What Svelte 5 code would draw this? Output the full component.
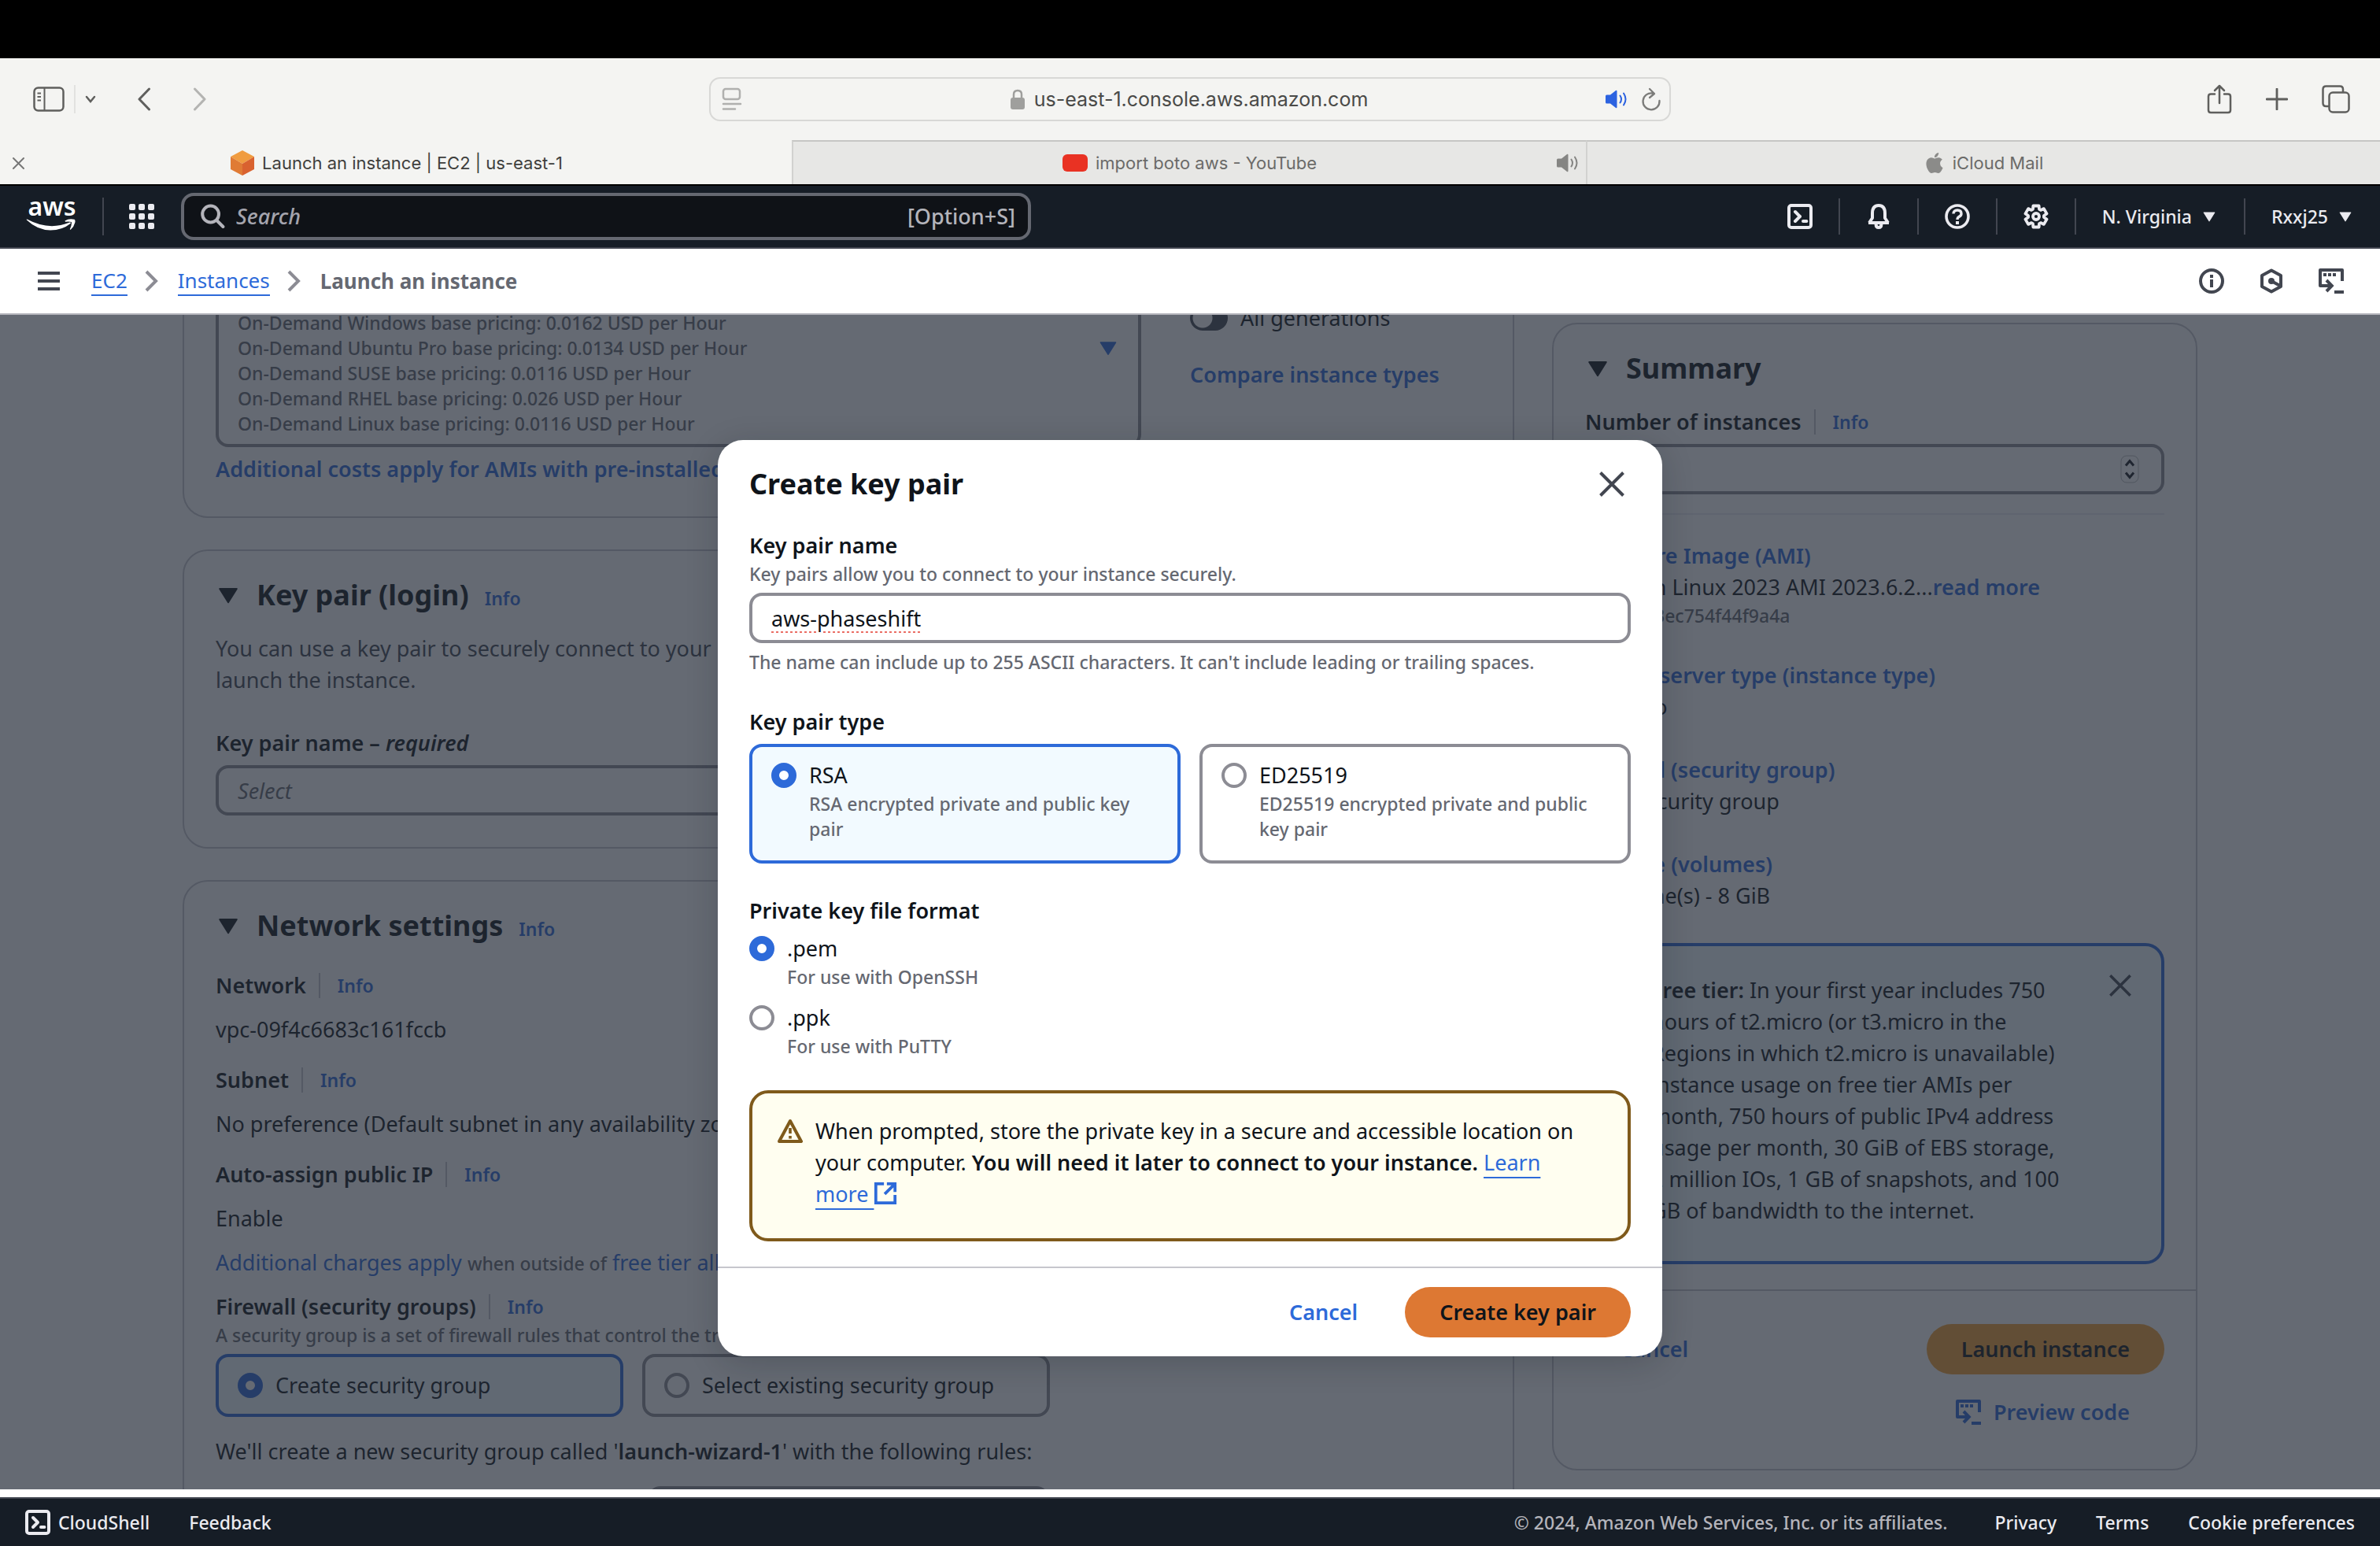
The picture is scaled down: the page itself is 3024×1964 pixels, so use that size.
<script>
  const pricing = [
    'Family: t2    1 vCPU    1 GiB Memory',
    'Current generation: true',
    'On-Demand Windows base pricing: 0.0162 USD per Hour',
    'On-Demand Ubuntu Pro base pricing: 0.0134 USD per Hour',
    'On-Demand SUSE base pricing: 0.0116 USD per Hour',
    'On-Demand RHEL base pricing: 0.026 USD per Hour',
    'On-Demand Linux base pricing: 0.0116 USD per Hour',
  ];

  const network = [
    { label: 'Network', value: 'vpc-09f4c6683c161fccb' },
    { label: 'Subnet', value: 'No preference (Default subnet in any availability zone)' },
    { label: 'Auto-assign public IP', value: 'Enable' },
  ];

  const keyTypes = [
    { id: 'rsa', label: 'RSA', desc: 'RSA encrypted private and public key pair' },
    { id: 'ed25519', label: 'ED25519', desc: 'ED25519 encrypted private and public key pair' },
  ];

  const formats = [
    { id: 'pem', label: '.pem', desc: 'For use with OpenSSH' },
    { id: 'ppk', label: '.ppk', desc: 'For use with PuTTY' },
  ];

  let keyType = $state('rsa');
  let format = $state('pem');
  let group = $state('create');
  let keyName = $state('aws-phaseshift');
  let instances = $state(1);

  // Six-toothed cog outline on a 16-unit grid.
  const gear = Array.from({ length: 6 }, (_, i) => i * 60 - 90)
    .flatMap((a) => [[a - 24, 5], [a - 15, 7], [a + 15, 7], [a + 24, 5]])
    .map(([a, r]) => {
      const t = (a * Math.PI) / 180;
      return `${(8 + r * Math.cos(t)).toFixed(2)},${(8 + r * Math.sin(t)).toFixed(2)}`;
    })
    .join(' ');
</script>

{#snippet triangle(cls)}
  <svg class={cls} viewBox="0 0 16 16" aria-hidden="true"><path d="M2.6 4h10.8L8 12.6z" fill="currentColor" stroke="currentColor" stroke-width="1" stroke-linejoin="round" /></svg>
{/snippet}

{#snippet shell()}
  <svg class="icon" viewBox="0 0 16 16" fill="none" stroke="currentColor" stroke-width="2" aria-hidden="true">
    <rect x="1" y="1" width="14" height="14" rx="1.5" />
    <path d="M5 5l3 3-3 3" stroke-linecap="round" stroke-linejoin="round" />
    <path d="M10 11h2.2" stroke-linecap="round" />
  </svg>
{/snippet}

{#snippet codeIcon()}
  <svg class="icon" viewBox="0 0 16 16" fill="none" stroke="currentColor" stroke-width="2" aria-hidden="true">
    <path d="M15 8V1H1v10h7" stroke-linejoin="round" />
    <path d="M5 7.5L8.4 11 5 14.5" />
    <path d="M3 4h2M6 4h2M9 4h2" />
    <path d="M10 15h6" />
  </svg>
{/snippet}

{#snippet closeIcon(cls)}
  <svg class={cls} viewBox="0 0 32 32" fill="none" stroke="currentColor" stroke-width="4" aria-hidden="true"><path d="M1.5 1.5l29 29M30.5 1.5l-29 29" /></svg>
{/snippet}

{#snippet speaker(cls)}
  <svg class={cls} viewBox="0 0 30 24" aria-hidden="true">
    <path d="M1 8q0-1.5 1.5-1.5H7L14 1q1.5-.8 1.5 1v20q0 1.800-1.500 1L7 17.500H2.500Q1 17.500 1 16z" fill="currentColor" />
    <path d="M19.500 7.500q3 4.500 0 9M24 4.500q5 7.500 0 15" fill="none" stroke="currentColor" stroke-width="2" stroke-linecap="round" />
  </svg>
{/snippet}

<div class="screen">
  <div class="bezel"></div>

  <div class="toolbar">
    <div class="tools">
      <button aria-label="Sidebar" class="sidebar-btn">
        <svg width="40" height="32" viewBox="0 0 40 32" fill="none" stroke="currentColor" stroke-width="2.5"><rect x="1.500" y="1.500" width="37" height="29" rx="5" /><path d="M14.500 2v28M5.500 8.500h4.500M5.500 13h4.500M5.500 17.500h4.500" stroke-width="2" /></svg>
      </button>
      <span class="thin-rule"></span>
      <button aria-label="Tab groups" class="drop-btn"><svg width="14" height="10" viewBox="0 0 14 10" fill="none" stroke="currentColor" stroke-width="2.500" stroke-linecap="round"><path d="M2 2l5 6 5-6" /></svg></button>
      <button aria-label="Back" class="back-btn"><svg width="18" height="30" viewBox="0 0 18 30" fill="none" stroke="currentColor" stroke-width="3" stroke-linecap="round" stroke-linejoin="round"><path d="M15.500 2L3 15l12.500 13" /></svg></button>
      <button aria-label="Forward" class="fwd-btn"><svg width="18" height="30" viewBox="0 0 18 30" fill="none" stroke="currentColor" stroke-width="3" stroke-linecap="round" stroke-linejoin="round"><path d="M2.500 2L15 15 2.500 28" /></svg></button>
    </div>
    <div class="address">
      <svg class="reader" width="26" height="30" viewBox="0 0 26 30" fill="none" stroke="currentColor" stroke-width="2.500" stroke-linecap="round"><rect x="2" y="2" width="21" height="13" rx="3" /><path d="M2 21h22M2 27.500h15" /></svg>
      <div class="url">
        <svg width="18" height="26" viewBox="0 0 18 26"><rect y="11" width="18" height="15" rx="3" fill="currentColor" /><path d="M4 12V7q0-5 5-5t5 5v5" fill="none" stroke="currentColor" stroke-width="2.500" /></svg>
        <span>us-east-1.console.aws.amazon.com</span>
      </div>
      {@render speaker('speaker blue')}
      <svg class="reload" width="26" height="30" viewBox="0 0 26 30" fill="none" stroke="currentColor" stroke-width="2.300" stroke-linecap="round" stroke-linejoin="round"><path d="M15 7.500A10.500 10.500 0 1 0 23.500 17M11 2l6 6-6 5" /></svg>
    </div>
    <div class="tools end">
      <button aria-label="Share"><svg width="32" height="38" viewBox="0 0 32 38" fill="none" stroke="currentColor" stroke-width="2.500" stroke-linecap="round" stroke-linejoin="round"><path d="M10 12.500H5Q2 12.500 2 15.500V33q0 3 3 3h22q3 0 3-3V15.500q0-3-3-3h-5M16 24V2M10 8l6-6 6 6" /></svg></button>
      <button aria-label="New tab"><svg width="28" height="28" viewBox="0 0 28 28" fill="none" stroke="currentColor" stroke-width="2.800" stroke-linecap="round"><path d="M14 1v26M1 14h26" /></svg></button>
      <button aria-label="Tab overview"><svg width="36" height="36" viewBox="0 0 36 36" fill="none" stroke="currentColor" stroke-width="2.500"><rect x="9.500" y="9.500" width="25" height="25" rx="4.500" /><path d="M9 27H5.500Q1.500 27 1.500 23V5.500Q1.500 1.500 5.500 1.500H23q4 0 4 4V9" /></svg></button>
    </div>
  </div>

  <div class="tabs">
    <div class="tab active">
      <button class="tab-close" aria-label="Close tab"><svg width="15" height="15" viewBox="0 0 15 15" stroke="currentColor" stroke-width="2" stroke-linecap="round"><path d="M1 1l13 13M14 1L1 14" /></svg></button>
      <svg width="30" height="32" viewBox="0 0 30 32"><path d="M15 0l15 8-15 9L0 8z" fill="#f09c40" /><path d="M0 8l15 9v15L0 24z" fill="#e07b35" /><path d="M30 8l-15 9v15l15-8z" fill="#d9622f" /></svg>
      <span>Launch an instance | EC2 | us-east-1</span>
    </div>
    <div class="tab">
      <svg width="32" height="22" viewBox="0 0 32 22"><rect width="32" height="22" rx="6" fill="#e93223" /></svg>
      <span>import boto aws - YouTube</span>
      {@render speaker('speaker tab-speaker')}
    </div>
    <div class="tab">
      <svg class="apple" width="26" height="26" viewBox="0 0 24 24"><path fill="currentColor" d="M12.152 6.896c-.948 0-2.415-1.078-3.960-1.040-2.040.027-3.910 1.183-4.961 3.014-2.117 3.675-.546 9.103 1.519 12.090 1.013 1.454 2.208 3.090 3.792 3.039 1.520-.065 2.090-.987 3.935-.987 1.831 0 2.350.987 3.960.948 1.637-.026 2.676-1.480 3.676-2.948 1.156-1.688 1.636-3.325 1.662-3.415-.039-.013-3.182-1.221-3.220-4.857-.026-3.040 2.480-4.494 2.597-4.559-1.429-2.090-3.623-2.324-4.390-2.376-2-.156-3.675 1.090-4.610 1.090zM15.530 3.830c.843-1.012 1.400-2.427 1.245-3.830-1.207.052-2.662.805-3.532 1.818-.780.896-1.454 2.338-1.273 3.714 1.338.104 2.715-.688 3.559-1.701" /></svg>
      <span>iCloud Mail</span>
    </div>
  </div>

  <header class="nav">
    <a class="logo" href="#home">
      <span>aws</span>
      <svg width="66" height="22" viewBox="0 0 66 22" fill="#fff"><path d="M1 1.500Q0 .2 2 .8 17 9 33 9.200 44 9 55.500 4.500 58 4 56.500 6 46 14.500 31 14.500 14 14 1 1.500z" /><path d="M49.500 2.500Q55-1 61.500.8q1.500.5.8 4Q61 10 57 13.500q-1.500.8-1-.7 2.500-6 1.800-8.800Q55 3 50 3.700z" /></svg>
    </a>
    <span class="nav-rule"></span>
    <button class="grid-btn" aria-label="Services">
      <svg class="icon" viewBox="0 0 16 16" fill="currentColor">
        {#each [0, 6, 12] as y}{#each [0, 6, 12] as x}<rect {x} {y} width="4" height="4" rx="1" />{/each}{/each}
      </svg>
    </button>
    <label class="search">
      <svg class="icon" viewBox="0 0 16 16" fill="none" stroke="currentColor" stroke-width="2" stroke-linecap="round"><circle cx="6.800" cy="6.500" r="5.200" /><path d="M10.700 10.500l4 4" /></svg>
      <input type="search" placeholder="Search" aria-label="Search" />
      <span>[Option+S]</span>
    </label>
    <div class="nav-items">
      <button aria-label="CloudShell">{@render shell()}</button>
      <button aria-label="Notifications"><svg class="icon" viewBox="0 0 16 16" fill="none" stroke="currentColor" stroke-width="2" stroke-linejoin="round"><path d="M1.500 12h13M2 12l2-3V6q0-5 4-5t4 5v3l2 3M6.300 13q0 2 1.700 2t1.700-2" /></svg></button>
      <button aria-label="Help"><svg class="icon" viewBox="0 0 16 16" fill="none" stroke="currentColor"><circle cx="8" cy="8" r="7" stroke-width="1.800" /><path d="M5.500 6.300Q5.500 4 8 4t2.500 2.200Q10.500 7.500 9 8.200 8 8.700 8 10" stroke-width="1.700" /><path d="M8 11v2" stroke-width="2" /></svg></button>
      <button aria-label="Settings"><svg class="icon" viewBox="0 0 16 16" fill="none" stroke="currentColor" stroke-width="1.900" stroke-linejoin="round"><polygon points={gear} /><circle cx="8" cy="8" r="2" /></svg></button>
      <button>N. Virginia {@render triangle('caret')}</button>
      <button>Rxxj25 {@render triangle('caret')}</button>
    </div>
  </header>

  <nav class="crumbs">
    <button class="menu" aria-label="Menu"><svg width="28" height="24" viewBox="0 0 28 24" stroke="currentColor" stroke-width="4"><path d="M0 2h28M0 12h28M0 22h28" /></svg></button>
    <a href="#ec2">EC2</a>
    <svg class="sep" width="18" height="28" viewBox="0 0 18 28" fill="none" stroke="currentColor" stroke-width="4"><path d="M2 2l12 12L2 26" /></svg>
    <a href="#instances">Instances</a>
    <svg class="sep" width="18" height="28" viewBox="0 0 18 28" fill="none" stroke="currentColor" stroke-width="4"><path d="M2 2l12 12L2 26" /></svg>
    <strong>Launch an instance</strong>
    <div class="crumb-tools">
      <button aria-label="Info"><svg class="icon" viewBox="0 0 16 16" fill="none" stroke="currentColor" stroke-width="2"><circle cx="8" cy="8" r="7" /><path d="M8 4v2M8 7v5" /></svg></button>
      <button aria-label="Diagnostics"><svg class="icon" viewBox="0 0 16 16" fill="none" stroke="currentColor" stroke-width="2" stroke-linejoin="round"><path d="M8 1.200l6 3.300v7l-6 3.300-6-3.300v-7zM8 8l5.500 3" /><circle cx="8" cy="8" r="2" fill="currentColor" stroke="none" /></svg></button>
      <button aria-label="Code">{@render codeIcon()}</button>
    </div>
  </nav>

  <main>
    <div class="layout">
      <div class="column">
        <section class="card first">
          <div class="type-row">
            <div class="type-col">
              <button class="type-select">
                <span class="pricing">
                  {#each pricing as line}<span>{line}</span>{/each}
                </span>
                {@render triangle('select-caret')}
              </button>
              <a class="bold gap8" href="#costs">Additional costs apply for AMIs with pre-installed software</a>
            </div>
            <div class="type-aside">
              <label class="toggle"><input type="checkbox" /><span>All generations</span></label>
              <a class="bold" href="#compare">Compare instance types</a>
            </div>
          </div>
        </section>

        <section class="card">
          <h2>{@render triangle('icon')}<span>Key pair (login)</span><a class="info" href="#info">Info</a></h2>
          <p class="muted-text gap24">You can use a key pair to securely connect to your instance. Ensure that you have access to the selected key pair before you<br />launch the instance.</p>
          <label class="field gap40"><strong>Key pair name – <em>required</em></strong>
            <input class="gap8" type="text" placeholder="Select" />
          </label>
        </section>

        <section class="card">
          <h2>{@render triangle('icon')}<span>Network settings</span><a class="info" href="#info">Info</a></h2>
          <div class="settings">
            {#each network as item}
              <div>
                <div class="label-row"><strong>{item.label}</strong><a class="info" href="#info">Info</a></div>
                <p class="gap16">{item.value}</p>
              </div>
            {/each}
          </div>
          <p class="gap16"><a href="#charges">Additional charges apply</a> <span class="small">when outside of</span> <a href="#tier">free tier allowance</a></p>
          <div class="label-row gap16"><strong>Firewall (security groups)</strong><a class="info" href="#info">Info</a></div>
          <p class="small">A security group is a set of firewall rules that control the traffic for your instance.</p>
          <div class="groups gap8">
            <label class="tile" class:on={group === 'create'}><input type="radio" name="group" value="create" bind:group={group} /><span>Create security group</span></label>
            <label class="tile" class:on={group === 'select'}><input type="radio" name="group" value="select" bind:group={group} /><span>Select existing security group</span></label>
          </div>
          <p class="gap24">We'll create a new security group called '<strong>launch-wizard-1</strong>' with the following rules:</p>
          <div class="rule gap24"><span></span><input type="text" aria-label="Source" /></div>
        </section>
      </div>

      <aside class="card summary">
        <h2>{@render triangle('icon')}<span>Summary</span></h2>
        <div class="label-row gap24"><strong>Number of instances</strong><a class="info" href="#info">Info</a></div>
        <div class="number gap8">
          <input type="number" aria-label="Number of instances" bind:value={instances} />
          <svg width="24" height="36" viewBox="0 0 24 36" fill="none" stroke="currentColor" stroke-width="3"><rect x="1" y="1" width="22" height="34" rx="7" stroke-width="1" opacity=".3" /><path d="M7 13.500l5-6 5 6M7 22.500l5 6 5-6" /></svg>
        </div>
        <hr class="soft" />
        <div class="facts">
          <div><a href="#ami">Software Image (AMI)</a><p>Amazon Linux 2023 AMI 2023.6.2...<a href="#more">read more</a></p><p class="small">ami-0453ec754f44f9a4a</p></div>
          <div><a href="#type">Virtual server type (instance type)</a><p>t2.micro</p></div>
          <div><a href="#firewall">Firewall (security group)</a><p>New security group</p></div>
          <div><a href="#storage">Storage (volumes)</a><p>1 volume(s) - 8 GiB</p></div>
        </div>
        <div class="tier">
          <svg class="icon" viewBox="0 0 16 16" fill="none" stroke="currentColor" stroke-width="2"><circle cx="8" cy="8" r="7" /><path d="M8 4v2M8 7v5" /></svg>
          <p><strong>Free tier:</strong> In your first year includes 750 hours of t2.micro (or t3.micro in the Regions in which t2.micro is unavailable) instance usage on free tier AMIs per month, 750 hours of public IPv4 address usage per month, 30 GiB of EBS storage, 2 million IOs, 1 GB of snapshots, and 100 GB of bandwidth to the internet.</p>
          <button aria-label="Dismiss">{@render closeIcon('close-sm')}</button>
        </div>
        <hr class="full" />
        <div class="summary-actions">
          <button class="btn link">Cancel</button>
          <div class="stack">
            <button class="btn launch">Launch instance</button>
            <button class="btn link preview">{@render codeIcon()}Preview code</button>
          </div>
        </div>
      </aside>
    </div>

    <div class="backdrop">
      <div class="modal" role="dialog" aria-modal="true" aria-labelledby="dialog-title">
        <div class="modal-body">
          <div class="modal-head">
            <h2 id="dialog-title">Create key pair</h2>
            <button aria-label="Close">{@render closeIcon('close-lg')}</button>
          </div>
          <div class="key-name">
            <label for="key-name"><strong>Key pair name</strong></label>
            <p class="small">Key pairs allow you to connect to your instance securely.</p>
            <input id="key-name" class="gap8 misspelt" type="text" spellcheck="false" bind:value={keyName} />
            <p class="small gap8">The name can include up to 255 ASCII characters. It can't include leading or trailing spaces.</p>
          </div>
          <div class="gap40" role="radiogroup" aria-label="Key pair type">
            <strong>Key pair type</strong>
            <div class="types gap8">
              {#each keyTypes as t}
                <label class="tile" class:on={keyType === t.id}>
                  <input type="radio" name="type" value={t.id} bind:group={keyType} />
                  <span>{t.label}<span class="small">{t.desc}</span></span>
                </label>
              {/each}
            </div>
          </div>
          <div class="gap40" role="radiogroup" aria-label="Private key file format">
            <strong>Private key file format</strong>
            <div class="formats gap8">
              {#each formats as f}
                <label class="option">
                  <input type="radio" name="format" value={f.id} bind:group={format} />
                  <span>{f.label}<span class="small">{f.desc}</span></span>
                </label>
              {/each}
            </div>
          </div>
          <div class="warning gap40">
            <svg class="icon" viewBox="0 0 16 16" fill="none" stroke="currentColor" stroke-width="2" stroke-linejoin="round"><path d="M8 1.500L15 14.500H1z" /><path d="M8 6v3.500M8 11v1.800" stroke-width="1.800" /></svg>
            <p>When prompted, store the private key in a secure and accessible location on your computer. <strong>You will need it later to connect to your instance.</strong> <a href="#learn">Learn more&nbsp;<svg class="external" viewBox="0 0 16 16" fill="none" stroke="currentColor" stroke-width="2"><path d="M7 1.500H1.500v13h13V9M9 1.500h5.500V7M14.500 1.500L7.500 8.500" /></svg></a></p>
          </div>
        </div>
        <div class="modal-foot">
          <button class="btn link">Cancel</button>
          <button class="btn primary">Create key pair</button>
        </div>
      </div>
    </div>
  </main>

  <footer>
    <button class="shell">{@render shell()}CloudShell</button>
    <a href="#feedback">Feedback</a>
    <span class="copy">© 2024, Amazon Web Services, Inc. or its affiliates.</span>
    <a href="#privacy">Privacy</a>
    <a href="#terms">Terms</a>
    <a href="#cookies">Cookie preferences</a>
  </footer>
</div>

<style>
  :global(body) { margin: 0; background: #fff; }
  * { box-sizing: border-box; }
  .screen {
    --blue: #2d6ad9;
    --ink: #0f141a;
    --grey: #656871;
    --line: #8c8c94;
    height: 100vh;
    display: flex;
    flex-direction: column;
    overflow: hidden;
    color: var(--ink);
    font: 27px/40px "Noto Sans", "Open Sans", sans-serif;
  }
  button { border: 0; padding: 0; margin: 0; background: none; color: inherit; font: inherit; text-align: left; }
  a { color: var(--blue); text-decoration: none; }
  p, h2 { margin: 0; }
  strong { font-weight: 600; }
  svg { flex: none; display: block; }
  input { font: inherit; color: inherit; margin: 0; }
  .icon { width: 32px; height: 32px; }
  .bezel { height: 74px; flex: none; background: #000; }

  .gap8 { margin-top: 8px; }
  .gap16 { margin-top: 16px; }
  .gap24 { margin-top: 24px; }
  .gap40 { margin-top: 40px; }

  .toolbar {
    height: 104px;
    flex: none;
    display: grid;
    grid-template-columns: 1fr 1222px 1fr;
    align-items: center;
    background: #f4f4f2;
    color: #5f5f5d;
    font-family: Inter, sans-serif;
    font-size: 25px;
  }
  .tools { display: flex; align-items: center; padding-left: 42px; }
  .tools.end { justify-content: flex-end; gap: 43px; padding: 0 38px 0 0; }
  .thin-rule { width: 2px; height: 36px; margin: 0 12px; background: #e2e2e0; }
  .drop-btn { margin-right: 52px; }
  .back-btn { margin-right: 53px; }
  .fwd-btn { color: #b4b4b2; }
  .address {
    height: 56px;
    display: flex;
    align-items: center;
    gap: 16px;
    padding: 0 10px 0 14px;
    border: 2px solid #d8d8d6;
    border-radius: 14px;
  }
  .reader { color: #b0b0ae; }
  .url { flex: 1; display: flex; justify-content: center; align-items: center; gap: 12px; padding-left: 40px; color: #4a4a48; }
  .url svg { color: #9f9f9d; }
  .speaker { width: 30px; height: 24px; }
  .blue { color: #2c62e0; }
  .reload { color: #7c7c7a; }

  .tabs {
    height: 58px;
    flex: none;
    display: grid;
    grid-template-columns: 1006px 1fr 1fr;
    border-bottom: 2px solid #000;
    color: #6b6b69;
    font: 22px/30px Inter, sans-serif;
  }
  .tab {
    position: relative;
    display: flex;
    align-items: center;
    justify-content: center;
    gap: 10px;
    background: #e7e7e5;
    border-left: 2px solid #d2d2d0;
    border-top: 2px solid #c6c6c4;
  }
  .tab.active { background: #f4f4f2; color: #3f3f3d; border-color: transparent; }
  .tab-close { position: absolute; left: 14px; color: #777; }
  .tab-speaker { position: absolute; right: 8px; color: #858583; }
  .apple { color: #8b8b89; }

  .nav {
    height: 80px;
    flex: none;
    display: flex;
    align-items: center;
    background: #161d26;
    border-bottom: 2px solid #424650;
    color: #ebebf0;
    font-size: 23px;
    font-weight: 500;
  }
  .logo { display: flex; flex-direction: column; align-items: center; width: 66px; margin: 0 31px 0 33px; color: #fff; font-size: 32px; font-weight: 600; line-height: 24px; }
  .logo svg { margin-top: 4px; }
  .nav-rule { width: 2px; height: 48px; background: #424650; }
  .grid-btn { margin: 0 34px 0 32px; }
  .search {
    width: 1080px;
    height: 60px;
    display: flex;
    align-items: center;
    gap: 14px;
    padding: 0 16px 0 20px;
    background: #0f1217;
    border: 4px solid #656871;
    border-radius: 16px;
    color: #b4b4bb;
    font-size: 27px;
  }
  .search input { flex: 1; min-width: 0; padding: 0; border: 0; background: none; }
  .search input::placeholder { color: #a4a4ad; font-style: italic; opacity: 1; }
  .nav-items { margin-left: auto; display: flex; align-items: center; }
  .nav-items button { height: 46px; display: flex; align-items: center; gap: 12px; padding: 0 33px; }
  .nav-items button + button { border-left: 2px solid #424650; }
  .caret { width: 20px; height: 20px; }
  .nav-items button:nth-last-child(-n + 2) { padding-right: 34px; }

  .crumbs {
    height: 84px;
    flex: none;
    display: flex;
    align-items: center;
    padding: 0 46px 0 48px;
    background: #fff;
    border-bottom: 2px solid #b4b4bb;
    font-size: 26px;
  }
  .crumbs a { border-bottom: 2px solid var(--blue); line-height: 36px; }
  .crumbs strong { color: var(--grey); font-weight: 700; }
  .menu { margin-right: 40px; color: #424650; }
  .sep { margin: 0 24px 0 22px; color: #8c8c94; }
  .crumb-tools { margin-left: auto; display: flex; gap: 44px; color: #424650; }

  main { flex: 1; min-height: 0; position: relative; overflow: hidden; margin-bottom: 10px; }
  .layout {
    display: grid;
    grid-template-columns: minmax(0, 1fr) 820px;
    gap: 48px;
    align-items: start;
    margin-top: -90px;
    padding: 0 232px;
  }
  .column { display: flex; flex-direction: column; gap: 40px; }
  .card { padding: 32px 40px 40px; border: 2px solid #c6c6cd; border-radius: 32px; background: #fff; }
  .card.first { padding-top: 0; border-top: 0; border-radius: 0 0 32px 32px; }
  h2 { display: flex; align-items: baseline; gap: 20px; font-size: 36px; line-height: 48px; font-weight: 700; }
  h2 .icon { align-self: center; }
  .info { font-size: 23px; font-weight: 600; line-height: 32px; }
  .bold { font-weight: 600; }
  .small { font-size: 23px; line-height: 32px; font-weight: 500; color: var(--grey); }
  .muted-text { color: #424650; white-space: nowrap; }

  .type-row { display: flex; gap: 62px; }
  .type-col { flex: 1; display: flex; flex-direction: column; }
  .type-select {
    height: 258px;
    display: flex;
    align-items: center;
    justify-content: space-between;
    padding: 16px 24px 10px;
    border: 4px solid var(--line);
    border-radius: 16px;
  }
  .pricing { display: flex; flex-direction: column; font-size: 23px; line-height: 32px; font-weight: 500; color: var(--grey); }
  .select-caret { width: 28px; height: 28px; color: var(--blue); }
  .type-aside { width: 370px; display: flex; flex-direction: column; gap: 32px; padding-top: 74px; }
  .toggle { display: flex; align-items: center; gap: 16px; }
  .toggle input {
    appearance: none;
    width: 48px;
    height: 32px;
    border-radius: 16px;
    background: radial-gradient(circle at 16px 16px, #fff 12px, #424650 13px);
  }

  .field { display: block; }
  .field input { display: block; width: 100%; }
  input[type='text'], input[type='number'] {
    height: 64px;
    padding: 0 24px;
    border: 4px solid var(--line);
    border-radius: 16px;
    background: #fff;
  }
  input::placeholder { color: var(--grey); font-style: italic; opacity: 1; }

  .settings { display: flex; flex-direction: column; gap: 24px; margin-top: 32px; }
  .label-row { display: flex; align-items: center; }
  .label-row .info { margin-left: 16px; padding-left: 22px; border-left: 2px solid #c6c6cd; }
  .groups { display: grid; grid-template-columns: repeat(3, minmax(0, 518px)); gap: 24px; }
  .tile {
    display: flex;
    gap: 16px;
    padding: 16px 24px 24px;
    border: 4px solid var(--line);
    border-radius: 16px;
  }
  .groups .tile { padding: 16px 24px; }
  .tile.on { border-color: var(--blue); background: #f2faff; }
  input[type='radio'] {
    appearance: none;
    flex: none;
    width: 32px;
    height: 32px;
    margin-top: 4px;
    border: 4px solid var(--line);
    border-radius: 50%;
    background: #fff;
  }
  input[type='radio']:checked { border: 10px solid var(--blue); }
  .rule { display: grid; grid-template-columns: repeat(3, 1fr); gap: 40px; }

  .summary { margin-top: 100px; padding-bottom: 0; }
  .number { position: relative; }
  .number input { display: block; width: 100%; appearance: textfield; }
  .number svg { position: absolute; right: 32px; top: 14px; color: #16191f; }
  hr { border: 0; height: 2px; }
  .soft { margin: 24px 0 32px; background: #ebebf0; }
  .full { margin: 32px -40px 42px; background: #c6c6cd; }
  .facts { display: flex; flex-direction: column; gap: 40px; }
  .facts a { font-weight: 600; }
  .tier {
    display: flex;
    align-items: flex-start;
    gap: 16px;
    margin-top: 40px;
    padding: 36px 32px 44px;
    border: 4px solid var(--blue);
    border-radius: 24px;
    background: #f2faff;
  }
  .tier p { width: 528px; }
  .tier button { margin-left: auto; padding: 0 6px; color: #424650; }
  .close-sm { width: 28px; height: 28px; }
  .close-lg { width: 32px; height: 32px; }
  .summary-actions { display: flex; justify-content: space-between; align-items: flex-start; padding-bottom: 40px; }
  .stack { display: flex; flex-direction: column; align-items: flex-end; gap: 16px; }
  .btn { height: 64px; padding: 0 44px; border-radius: 32px; font-weight: 600; text-align: center; }
  .btn.link { color: var(--blue); }
  .btn.launch { background: #f5a033; }
  .btn.primary { background: #dd7833; }
  .preview { display: flex; align-items: center; gap: 16px; }

  .backdrop {
    position: absolute;
    inset: 0;
    display: flex;
    align-items: center;
    justify-content: center;
    padding-bottom: 10px;
    background: rgba(35, 43, 55, 0.7);
  }
  .modal { width: 1200px; background: #fff; border-radius: 32px; box-shadow: 0 8px 40px rgba(15, 20, 26, 0.2); }
  .modal-body { padding: 32px 40px; }
  .modal-head { display: flex; justify-content: space-between; align-items: center; margin-bottom: 34px; }
  .modal-head button { margin-right: 8px; color: #424650; }
  .key-name { display: flex; flex-direction: column; }
  .misspelt { text-decoration: underline dotted #ea6d64 3px; text-underline-offset: 6px; }
  .types { display: grid; grid-template-columns: 1fr 1fr; gap: 24px; }
  .tile .small, .option .small { display: block; }
  .formats { display: flex; flex-direction: column; gap: 16px; }
  .option { display: flex; gap: 16px; }
  .warning {
    display: flex;
    gap: 16px;
    padding: 28px 56px 36px 32px;
    border: 4px solid #7f5a1b;
    border-radius: 24px;
    background: #fffef0;
  }
  .warning .icon { margin-top: 4px; color: #7f5a1b; }
  .warning a { text-decoration: underline; text-decoration-thickness: 2px; text-underline-offset: 8px; }
  .external { display: inline-block; width: 30px; height: 30px; vertical-align: -4px; }
  .modal-foot { display: flex; justify-content: flex-end; gap: 16px; padding: 24px 40px; border-top: 2px solid #c6c6cd; }

  footer {
    height: 62px;
    flex: none;
    display: flex;
    align-items: center;
    padding: 0 32px;
    background: #161d26;
    border-top: 2px solid #424650;
    color: #ebebf0;
    font-size: 23px;
    font-weight: 500;
  }
  footer a { color: inherit; margin-left: 50px; }
  .shell { display: flex; align-items: center; gap: 10px; }
  .copy { margin-left: auto; color: #b4b4bb; }
  .copy + a { margin-left: 60px; }
</style>
